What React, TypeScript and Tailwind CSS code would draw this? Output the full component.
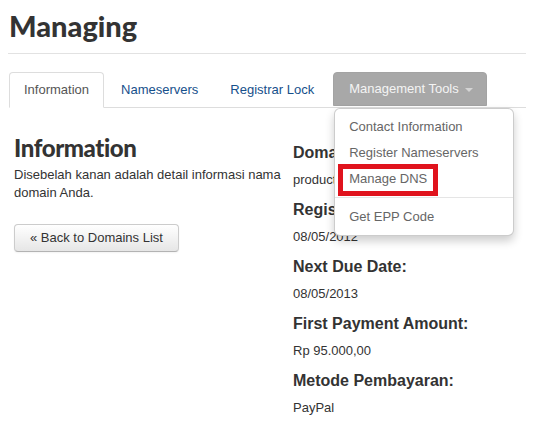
import React from 'react';

const details = [
  { label: 'Domain:', value: 'productdomain.com' },
  { label: 'Registration Date:', value: '08/05/2012' },
  { label: 'Next Due Date:', value: '08/05/2013' },
  { label: 'First Payment Amount:', value: 'Rp 95.000,00' },
  { label: 'Metode Pembayaran:', value: 'PayPal' },
];

function Tabs() {
  return (
    <ul className="mt-[18px] ml-[1px] flex border-b border-[#dddddd]">
      <li className="mr-[2px] -mb-px">
        <a className="block h-[36px] rounded-t-[4px] border border-[#dddddd] border-b-white bg-white px-[14px] py-[7px] leading-[20px] text-[#555555]">
          Information
        </a>
      </li>
      <li className="mr-[2px] -mb-px">
        <a className="block h-[36px] border border-transparent px-[14px] py-[7px] leading-[20px] text-[#16508b]">
          Nameservers
        </a>
      </li>
      <li className="mr-[4px] -mb-px">
        <a className="block h-[36px] border border-transparent px-[14px] py-[7px] leading-[20px] text-[#16508b]">
          Registrar Lock
        </a>
      </li>
      <li className="relative">
        <a className="flex h-[34px] items-center rounded-t-[4px] border border-[#a3a3a3] bg-[#a8a8a8] pl-[15px] pr-[13px] leading-[20px] text-[#f4f4f4]">
          Management Tools
          <span className="ml-[6px] mt-[2px] h-0 w-0 border-x-[4px] border-t-[4px] border-x-transparent border-t-[#d4d4d4]" />
        </a>
        <div className="absolute left-[1px] top-[36px] z-10 w-[180px] rounded-[6px] border border-[rgba(0,0,0,0.2)] bg-white py-[5px] shadow-[0_5px_10px_rgba(0,0,0,0.2)]">
          <ul className="text-[#666666]">
            <li className="px-[14px] py-[3px] leading-[20px]">Contact Information</li>
            <li className="px-[14px] py-[3px] leading-[20px]">Register Nameservers</li>
            <li className="relative px-[14px] py-[3px] leading-[20px]">
              Manage DNS
              <span className="absolute -top-[2px] left-[3px] h-[32px] w-[100px] border-[5px] border-[#e0131d]" />
            </li>
            <li className="mt-[5px] mb-[6px] h-px bg-[#e5e5e5]" />
            <li className="px-[14px] py-[3px] leading-[20px]">Get EPP Code</li>
          </ul>
        </div>
      </li>
    </ul>
  );
}

export default function App() {
  return (
    <div className="min-h-screen bg-white px-[8px] font-['Liberation_Sans',Arial,sans-serif] text-[13px] text-[#333333]">
      <h1 className="border-b border-[#e2e2e2] pt-[7px] pb-[9px] pl-[1px] font-['Lato',sans-serif] text-[29px] leading-[37px] font-black text-[#333333]">
        Managing
      </h1>

      <Tabs />

      <div className="mt-[25px] grid grid-cols-[275px_1fr] gap-x-[4px] pl-[6px]">
        <div>
          <h2 className="font-['Lato',sans-serif] text-[24px] leading-[30px] font-black tracking-[-0.4px] text-[#333333]">
            Information
          </h2>
          <p className="mt-[3px] leading-[18px]">
            Disebelah kanan adalah detail informasi nama domain Anda.
          </p>
          <button className="mt-[22px] h-[28px] rounded-[4px] border border-[#cccccc] border-b-[#b3b3b3] bg-gradient-to-b from-white to-[#e6e6e6] px-[15px] leading-[18px] text-[#333333] shadow-[inset_0_1px_0_rgba(255,255,255,0.2),0_1px_2px_rgba(0,0,0,0.05)]">
            « Back to Domains List
          </button>
        </div>
        <div className="pt-[10px]">
          {details.map((d) => (
            <div key={d.label}>
              <h3 className="mb-[8px] text-[16px] leading-[20px] font-bold">{d.label}</h3>
              <p className="mb-[11px] leading-[18px]">{d.value}</p>
            </div>
          ))}
        </div>
      </div>
    </div>
  );
}
